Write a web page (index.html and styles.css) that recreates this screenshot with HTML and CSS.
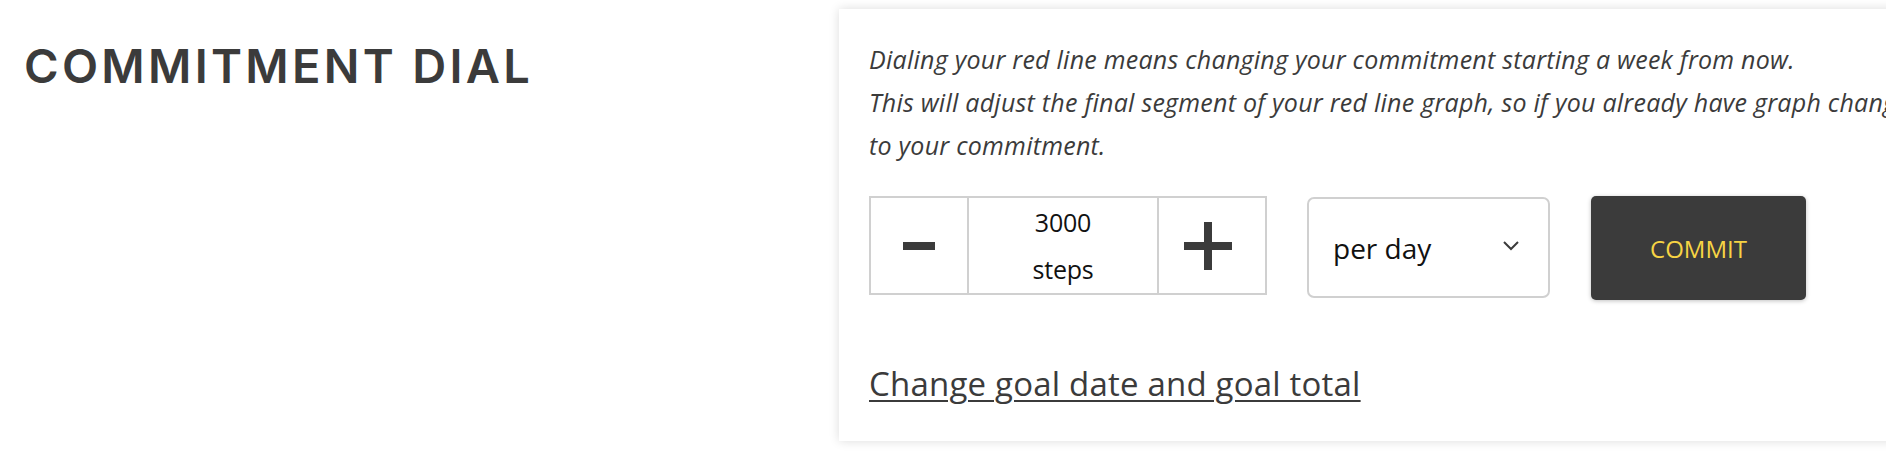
FILE: index.html
```html
<!DOCTYPE html>
<html lang="en">
<head>
<meta charset="utf-8">
<title>Commitment Dial</title>
<link rel="stylesheet" href="styles.css">
</head>
<body>
<div class="page">
  <h1 class="title">COMMITMENT DIAL</h1>
  <section class="card">
    <p class="intro">Dialing your red line means changing your commitment starting a week from now.<br>This will adjust the final segment of your red line graph, so if you already have graph changes<br>to your commitment.</p>
    <div class="controls">
      <div class="stepper">
        <button class="step minus" type="button" aria-label="decrease">
          <svg width="32" height="8" viewBox="0 0 32 8"><rect x="0" y="0" width="32" height="8" fill="#3b3b3b"/></svg>
        </button>
        <div class="value"><span>3000</span><span>steps</span></div>
        <button class="step plus" type="button" aria-label="increase">
          <svg width="48" height="48" viewBox="0 0 48 48"><rect x="0" y="20" width="48" height="8" fill="#3b3b3b"/><rect x="20" y="0" width="8" height="48" fill="#3b3b3b"/></svg>
        </button>
      </div>
      <div class="select">
        <span>per day</span>
        <svg class="chev" width="18" height="11" viewBox="0 0 18 11"><path d="M2 2 L9 9 L16 2" fill="none" stroke="#3b3b3b" stroke-width="2"/></svg>
      </div>
      <button class="commit" type="button">COMMIT</button>
    </div>
    <a class="link" href="#">Change goal date and goal total</a>
  </section>
</div>
</body>
</html>
```
FILE: styles.css
```css
html, body {
  margin: 0;
  padding: 0;
  background: #fff;
  overflow: hidden;
}
body {
  width: 1886px;
  height: 464px;
  color: #3b3b3b;
  font-family: "Open Sans", "Noto Sans", sans-serif;
}
.page {
  display: flex;
  align-items: flex-start;
}
.title {
  margin: 38px 0 0 24px;
  width: 815px;
  flex: none;
  font-family: "Inter", "Open Sans", sans-serif;
  font-weight: 600;
  font-size: 47px;
  line-height: 56px;
  letter-spacing: 3.3px;
  color: #3b3b3b;
}
.card {
  flex: none;
  margin-top: 9px;
  width: 1200px;
  height: 432px;
  box-sizing: border-box;
  padding: 29px 30px 0 30px;
  background: #fff;
  box-shadow: 0 0 10px rgba(0, 0, 0, 0.14);
}
.intro {
  margin: 0;
  font-style: italic;
  font-size: 25px;
  line-height: 43px;
  letter-spacing: 0.25px;
  white-space: nowrap;
  color: #3b3b3b;
}
.controls {
  display: flex;
  align-items: flex-start;
  margin-top: 29px;
  gap: 40px;
}
.stepper {
  display: flex;
  height: 99px;
  box-sizing: border-box;
  border: 2px solid #d0d0d0;
}
.step {
  display: flex;
  align-items: center;
  justify-content: center;
  padding: 0;
  margin: 0;
  border: 0;
  background: #fff;
}
.minus {
  width: 98px;
  border-right: 2px solid #d0d0d0;
}
.plus {
  width: 108px;
  border-left: 2px solid #d0d0d0;
  padding-right: 8px;
  box-sizing: border-box;
}
.value {
  width: 188px;
  display: flex;
  flex-direction: column;
  align-items: center;
  justify-content: center;
  font-size: 25px;
  line-height: 47px;
  letter-spacing: -0.2px;
  color: #111;
}
.select {
  width: 243px;
  height: 101px;
  margin-top: 1px;
  box-sizing: border-box;
  border: 2px solid #d0d0d0;
  border-radius: 7px;
  display: flex;
  align-items: center;
  justify-content: space-between;
  padding: 0 28px 0 24px;
  font-size: 28px;
  letter-spacing: 0px;
  color: #111;
}
.chev {
  margin-top: -4px;
}
.commit {
  width: 215px;
  height: 104px;
  margin: 0 0 0 1px;
  border: 0;
  border-radius: 5px;
  background: #3b3b3b;
  color: #f7d444;
  font-family: "Open Sans", sans-serif;
  font-size: 24px;
  letter-spacing: 0px;
  box-shadow: 0 1px 4px rgba(0, 0, 0, 0.25);
}
.link {
  display: inline-block;
  margin-top: 64px;
  font-size: 33px;
  line-height: 40px;
  letter-spacing: 0.2px;
  color: #3b3b3b;
  text-decoration: underline;
  text-underline-offset: 4px;
  text-decoration-thickness: 2px;
}
```
